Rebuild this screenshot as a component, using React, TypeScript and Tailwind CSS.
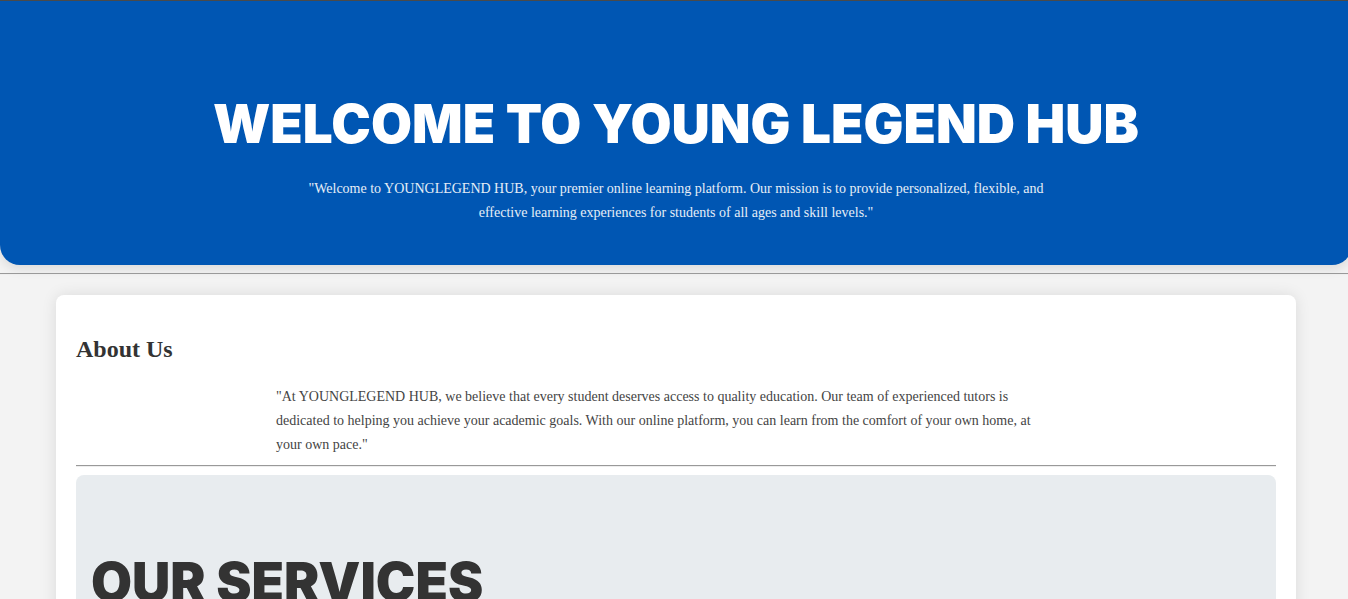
export default function App() {
  return (
    <div className="min-h-screen overflow-hidden bg-[#f3f3f3] font-['Liberation_Serif',serif] text-sm text-[#333]">
      <div className="-mr-1">
        <header className="rounded-b-[20px] border-t border-[#4a4a4a] bg-[#0056b3] px-5 pt-[87px] pb-10 text-center text-white shadow-[0_4px_12px_rgba(0,0,0,0.1)]">
          <h1 className="font-['Inter',sans-serif] text-[53px] leading-[72px] font-black">
            WELCOME TO YOUNG LEGEND HUB
          </h1>
          <p className="mx-auto mt-[17px] max-w-[800px] leading-6 text-[#e6eef7]">
            "Welcome to YOUNGLEGEND HUB, your premier online learning platform. Our mission is to
            provide personalized, flexible, and
            <br />
            effective learning experiences for students of all ages and skill levels."
          </p>
        </header>
        <hr className="my-2 h-0.5 border-t border-b border-t-[#999] border-b-[#eee]" />
        <main className="mx-auto mt-5 max-w-[1240px] rounded-lg bg-white p-5 shadow-[0_0_15px_rgba(0,0,0,0.1)]">
          <section>
            <h2 className="pt-5 text-2xl leading-7 font-bold">About Us</h2>
            <p className="mx-auto mt-[22px] max-w-[800px] leading-6 text-[#444]">
              "At YOUNGLEGEND HUB, we believe that every student deserves access to quality
              education. Our team of experienced tutors is
              <br />
              dedicated to helping you achieve your academic goals. With our online platform, you
              can learn from the comfort of your own home, at
              <br />
              your own pace."
            </p>
          </section>
          <hr className="my-2 h-0.5 border-t border-b border-t-[#999] border-b-[#eee]" />
          <section className="rounded-lg bg-[#e8ecef] px-[15px] pt-[71px] pb-20">
            <h2 className="font-['Inter',sans-serif] text-[53px] leading-[72px] font-black">
              OUR SERVICES
            </h2>
          </section>
        </main>
      </div>
    </div>
  );
}
